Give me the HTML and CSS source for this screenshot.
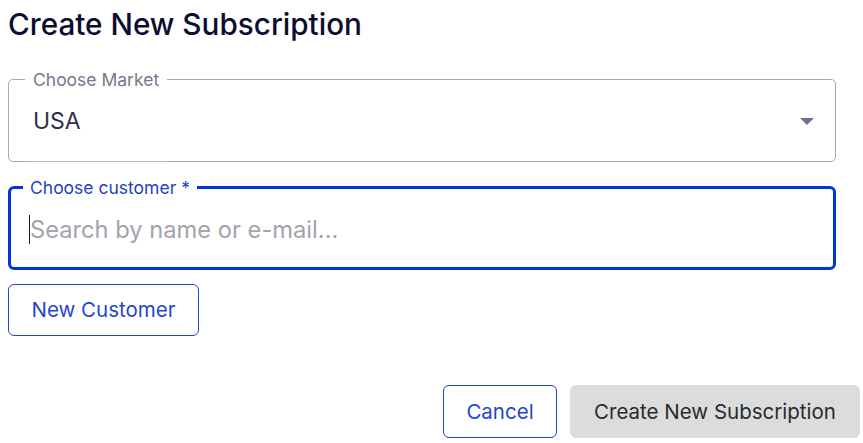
FILE: index.html
```html
<!DOCTYPE html>
<html lang="en">
<head>
<meta charset="utf-8">
<title>Create New Subscription</title>
<link rel="stylesheet" href="styles.css">
</head>
<body>
<main class="page">
  <h1 class="title">Create New Subscription</h1>

  <fieldset class="field field-market">
    <legend class="field-label">Choose Market</legend>
    <div class="select-row">
      <span class="select-value">USA</span>
      <span class="select-arrow"></span>
    </div>
  </fieldset>

  <fieldset class="field field-customer">
    <legend class="field-label label-active">Choose customer *</legend>
    <div class="input-row">
      <span class="caret"></span>
      <input class="search-input" type="text" placeholder="Search by name or e-mail...">
    </div>
  </fieldset>

  <button class="btn btn-outline btn-new" type="button">New Customer</button>

  <div class="actions">
    <button class="btn btn-outline btn-cancel" type="button">Cancel</button>
    <button class="btn btn-disabled btn-create" type="button">Create New Subscription</button>
  </div>
</main>
</body>
</html>
```

FILE: styles.css
```css
* { box-sizing: border-box; }

html, body {
  margin: 0;
  padding: 0;
  background: #ffffff;
}

body {
  font-family: Inter, "Noto Sans", "Liberation Sans", sans-serif;
}

.page {
  width: 863px;
  padding: 6px 3px 0 8px;
  display: flex;
  flex-direction: column;
}

.title {
  margin: 0;
  font-size: 29.7px;
  line-height: 36px;
  font-weight: 500;
  color: #0c0c30;
}

.field {
  position: relative;
  width: 828px;
  margin: 0;
  padding: 0;
  min-width: 0;
  border-radius: 5px;
}

.field-market {
  margin-top: 28px;
  border: 1px solid #a9a9b0;
}

.field-market::after {
  content: "";
  position: absolute;
  left: 17px;
  bottom: -1px;
  width: 141px;
  height: 1px;
  background: #b6b6ce;
}

.field-customer {
  margin-top: 16px;
  border: 3px solid #0037dc;
  border-radius: 6px;
}

.field-label {
  margin-left: 16px;
  padding: 0 8px;
  font-size: 17.5px;
  line-height: 19px;
  color: #77778a;
}

.label-active {
  margin-left: 12px;
  padding: 0 7px;
  color: #2443c4;
}

.select-row {
  display: flex;
  align-items: center;
  justify-content: space-between;
  height: 72px;
  padding: 19px 21px 27px 24px;
}

.select-value {
  font-size: 23px;
  line-height: 26px;
  color: #30304c;
}

.select-arrow {
  width: 0;
  height: 0;
  border-left: 7px solid transparent;
  border-right: 7px solid transparent;
  border-top: 7px solid #727290;
}

.input-row {
  display: flex;
  align-items: center;
  height: 70px;
  padding: 18px 18px 23px 18px;
}

.caret {
  width: 1px;
  height: 29px;
  background: #1a1a1a;
  flex: none;
}

.search-input {
  flex: 1;
  min-width: 0;
  height: 29px;
  border: 0;
  outline: none;
  padding: 0;
  margin: 0;
  background: transparent;
  font-family: Inter, "Noto Sans", "Liberation Sans", sans-serif;
  font-size: 23.7px;
  color: #30304c;
}

.search-input::placeholder {
  color: #a3a3ad;
  opacity: 1;
}

.btn {
  font-family: Inter, "Noto Sans", "Liberation Sans", sans-serif;
  font-size: 20.5px;
  line-height: 24px;
  border-radius: 6px;
  margin: 0;
  cursor: pointer;
}

.btn-outline {
  background: #ffffff;
  border: 1px solid #1f46c8;
  color: #1f46d0;
}

.btn-new {
  align-self: flex-start;
  margin-top: 14px;
  width: 191px;
  height: 52px;
  padding: 0;
}

.actions {
  display: flex;
  justify-content: flex-end;
  gap: 13px;
  margin-top: 49px;
}

.btn-cancel {
  width: 114px;
  height: 53px;
  padding: 0;
}

.btn-disabled {
  background: #dcdcdc;
  border: 1px solid #dcdcdc;
  color: #2a2a2e;
}

.btn-create {
  width: 290px;
  height: 53px;
  padding: 0;
}
```
